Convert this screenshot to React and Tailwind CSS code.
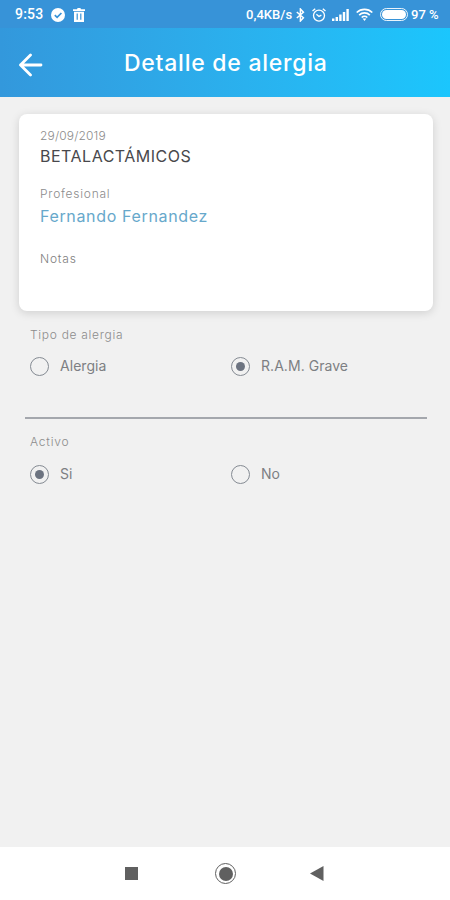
import { useState } from "react";

const StatusBar = () => {
  return (
    <div className="flex h-7 items-center bg-[#3793d8] pl-[15px] pr-[11px] pt-px font-['Roboto',sans-serif] text-white">
      <span className="w-[29px] whitespace-nowrap text-[14px] font-medium tracking-[0.2px]">
        9:53
      </span>
      <svg className="ml-[7px] h-[14px] w-[14px]" viewBox="0 0 14 14">
        <circle cx="7" cy="7" r="7" fill="#fff" />
        <path d="M3.8 7.2l2.3 2.2 4.3-4.4" fill="none" stroke="#3793d8" strokeWidth="1.7" />
      </svg>
      <svg className="ml-2 h-[14px] w-3" viewBox="0 0 12 14">
        <path d="M0 1.2h4L4.6 0h2.8L8 1.2h4v1.7H0z M1 3.7h10V14H1z" fill="#fff" />
        <path d="M4.2 5.5v6.3M7.8 5.5v6.3" stroke="#3793d8" strokeWidth="1.2" />
      </svg>
      <span className="ml-auto w-[47px] whitespace-nowrap text-[13px] font-medium tracking-[0.05px]">
        0,4KB/s
      </span>
      <svg className="ml-[3px] h-[14px] w-[9px]" viewBox="0 0 9 14" fill="none" stroke="#fff" strokeWidth="1.5">
        <path d="M.8 4l6.6 5.8L4.4 13V1l3 3.2L.8 10" />
      </svg>
      <svg className="ml-[7px] h-[14px] w-[14px]" viewBox="0 0 14 14" fill="none" stroke="#fff" strokeWidth="1.3">
        <circle cx="7" cy="7.6" r="5.5" />
        <path d="M.5 3L3.2.7M13.5 3L10.8.7M4.4 6.2L7 8.4l2.4-1.2" />
      </svg>
      <svg className="ml-[6px] h-3 w-[17px]" viewBox="0 0 17 12" fill="#fff">
        <path d="M0 9.5h2.4V12H0zM3.6 8H6v4H3.6zM7.2 5.5h2.4V12H7.2zM10.8 3h2.4v9h-2.4zM14.4 0h2.4v12h-2.4z" />
      </svg>
      <svg className="ml-[7px] h-[13px] w-[17px]" viewBox="0 0 17 13" fill="none" stroke="#fff" strokeWidth="1.7">
        <path d="M.7 4.5a11.3 11.3 0 0 1 15.6 0M3.2 7.1a7.6 7.6 0 0 1 10.6 0M5.7 9.5a4 4 0 0 1 5.6 0" />
        <path d="M6.6 10.5h3.8L8.5 13z" fill="#fff" stroke="none" />
      </svg>
      <div className="ml-[7px] h-[13px] w-[28px] rounded-full border border-white/90 p-px">
        <div className="h-full rounded-full bg-white" />
      </div>
      <span className="ml-[3px] w-[28px] whitespace-nowrap text-[13px] font-medium">
        97 %
      </span>
    </div>
  );
};

const Header = () => {
  return (
    <header className="flex h-[69px] items-center bg-linear-to-r from-[#3398dc] to-[#1bc6fd] text-white">
      <button type="button" className="ml-[19px] mt-[5px]">
        <svg className="h-6 w-6" viewBox="0 0 24 24" fill="none" stroke="#fff" strokeWidth="2.8" strokeLinecap="round" strokeLinejoin="round">
          <path d="M22 12H1.5M11.5 2L1.5 12l10 10" />
        </svg>
      </button>
      <h1 className="ml-[81px] whitespace-nowrap text-[23px] font-medium leading-7 tracking-[0.75px]">
        Detalle de alergia
      </h1>
    </header>
  );
};

const Radio = ({ label, checked, onSelect }) => {
  return (
    <button type="button" onClick={onSelect} className="flex h-5 w-[201px] items-center text-left">
      <span className="flex h-[19px] w-[19px] items-center justify-center rounded-full border-[1.5px] border-[#858b93]">
        {checked && <span className="h-[9px] w-[9px] rounded-full bg-[#6c7380]" />}
      </span>
      <span className="ml-[11px] whitespace-nowrap text-[14px] leading-5 tracking-[0.05px] text-[#7d7f83]">
        {label}
      </span>
    </button>
  );
};

const App = () => {
  const [tipo, setTipo] = useState("ram");
  const [activo, setActivo] = useState(true);

  return (
    <div className="flex h-[900px] w-[450px] flex-col overflow-hidden bg-[#f1f1f1] font-['Inter',sans-serif]">
      <StatusBar />
      <Header />
      <main className="flex-1">
        <section className="ml-[19px] mt-[17px] h-[197px] w-[414px] rounded-lg bg-white pl-[21px] pt-[14px] shadow-[0_2px_10px_rgba(0,0,0,0.14)]">
          <p className="h-4 text-[12px] font-light leading-4 tracking-[0.15px] text-[#8c8c8c]">29/09/2019</p>
          <p className="h-6 text-[16px] leading-6 tracking-[0.5px] text-[#48484c]">BETALACTÁMICOS</p>
          <p className="mt-[18px] h-4 text-[12px] font-light leading-4 tracking-[0.75px] text-[#8c8c8c]">Profesional</p>
          <p className="mt-[2px] h-6 text-[16px] leading-6 tracking-[0.65px] text-[#67a8cb]">Fernando Fernandez</p>
          <p className="mt-[23px] h-4 text-[12px] font-light leading-4 tracking-[0.8px] text-[#808080]">Notas</p>
        </section>
        <section className="ml-[30px] mt-[16px]">
          <p className="h-4 text-[12px] font-light leading-4 tracking-[0.7px] text-[#8c8c8c]">Tipo de alergia</p>
          <div className="mt-[13px] flex">
            <Radio label="Alergia" checked={tipo === "alergia"} onSelect={() => setTipo("alergia")} />
            <Radio label="R.A.M. Grave" checked={tipo === "ram"} onSelect={() => setTipo("ram")} />
          </div>
        </section>
        <div className="ml-[25px] mt-[41px] h-[2px] w-[402px] bg-[#a4a7ad]" />
        <section className="ml-[30px] mt-[15px]">
          <p className="h-4 text-[12px] font-light leading-4 tracking-[0.8px] text-[#8c8c8c]">Activo</p>
          <div className="mt-[14px] flex">
            <Radio label="Si" checked={activo} onSelect={() => setActivo(true)} />
            <Radio label="No" checked={!activo} onSelect={() => setActivo(false)} />
          </div>
        </section>
      </main>
      <nav className="flex h-[53px] items-center bg-white pl-[125px]">
        <div className="h-[13px] w-[13px] bg-[#606060]" />
        <div className="ml-[77px] flex h-[21px] w-[21px] items-center justify-center rounded-full border-[1.5px] border-[#606060]">
          <div className="h-[14px] w-[14px] rounded-full bg-[#606060]" />
        </div>
        <svg className="ml-[74px] h-[15px] w-[14px]" viewBox="0 0 14 15">
          <path d="M0 7.5L13.5 0v15z" fill="#606060" />
        </svg>
      </nav>
    </div>
  );
};

export default App;
